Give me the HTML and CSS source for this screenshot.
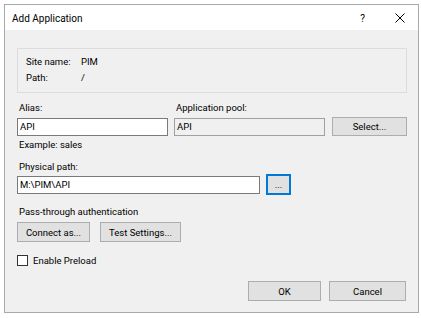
FILE: index.html
```html
<!DOCTYPE html>
<html lang="en">
<head>
    <meta charset="UTF-8">
    <title>Add Application</title>
    <link rel="stylesheet" href="styles.css">
</head>
<body>
    <div class="window">
        <div class="titlebar">
            <span class="title">Add Application</span>
            <span class="help">?</span>
            <svg class="close" width="10" height="10" viewBox="0 0 10 10">
                <path d="M0.5 0.5 L9.5 9.5 M9.5 0.5 L0.5 9.5" stroke="#000" stroke-width="1" fill="none"/>
            </svg>
        </div>
        <div class="content">
            <div class="groupbox">
                <div class="info-row"><span class="info-label">Site name:</span><span>PIM</span></div>
                <div class="info-row"><span class="info-label">Path:</span><span>/</span></div>
            </div>

            <div class="row alias-row">
                <div class="field">
                    <label>Alias:</label>
                    <div class="input">API</div>
                </div>
                <div class="field">
                    <label>Application pool:</label>
                    <div class="input readonly">API</div>
                </div>
                <button class="btn select-btn">Select...</button>
            </div>
            <div class="hint">Example: sales</div>

            <div class="field path-field">
                <label>Physical path:</label>
                <div class="row">
                    <div class="input wide">M:\PIM\API</div>
                    <button class="btn browse-btn">...</button>
                </div>
            </div>

            <div class="section-label">Pass-through authentication</div>
            <div class="row auth-row">
                <button class="btn connect-btn">Connect as...</button>
                <button class="btn test-btn">Test Settings...</button>
            </div>

            <div class="check-row">
                <span class="checkbox"></span>
                <span>Enable Preload</span>
            </div>

            <div class="row footer">
                <button class="btn ok-btn">OK</button>
                <button class="btn cancel-btn">Cancel</button>
            </div>
        </div>
    </div>
</body>
</html>
```

FILE: styles.css
```css
/* General Styles */
body {
    margin: 0;
    background: #fff;
    font-family: Roboto, "Noto Sans", sans-serif;
    font-size: 9.5px;
    color: #000;
}

.window {
    margin: 4px 0 0 4px;
    width: 413px;
    height: 307px;
    border: 1px solid #a9a9a9;
    background: #f0f0f0;
    display: flex;
    flex-direction: column;
}

.titlebar {
    height: 25px;
    background: #fff;
    display: flex;
    align-items: center;
    padding: 1px 0 0 7px;
    box-sizing: border-box;
}

.title {
    font-size: 10px;
    flex: 1;
}

.help {
    font-size: 10px;
    margin-right: 30px;
}

.close {
    margin-right: 13px;
}

.content {
    padding: 18px 11px 0 12px;
}

.groupbox {
    height: 38px;
    border: 1px solid #dcdcdc;
    padding: 5px 0 0 8px;
}

.info-row {
    display: flex;
    height: 16px;
    line-height: 16px;
    white-space: nowrap;
}

.info-label {
    width: 55px;
    flex-shrink: 0;
}

.row {
    display: flex;
    align-items: flex-end;
}

label {
    display: block;
    height: 14px;
    line-height: 14px;
    margin: 0 0 3px 2px;
    white-space: nowrap;
}

.alias-row {
    margin-top: 8px;
    gap: 6px;
}

.field .input {
    width: 147px;
}

.input {
    height: 16px;
    line-height: 16px;
    border: 1px solid #7a7a7a;
    background: #fff;
    padding-left: 2px;
    box-sizing: content-box;
}

.input.readonly {
    background: #f0f0f0;
    border-color: #a0a0a0;
}

.btn {
    font-family: inherit;
    font-size: 9.5px;
    color: #000;
    background: #e1e1e1;
    border: 1px solid #adadad;
    height: 20px;
    padding: 0;
    margin: 0;
}

.select-btn {
    width: 77px;
    height: 19px;
    margin-left: 1px;
}

.hint {
    height: 14px;
    line-height: 14px;
    margin: 2px 0 0 2px;
}

.path-field {
    margin-top: 8px;
}

.path-field label {
    margin-bottom: 0;
}

.path-field .row {
    gap: 6px;
    align-items: center;
}

.input.wide {
    width: 239px;
}

.browse-btn {
    width: 25px;
    height: 21px;
    border: 2px solid #0078d7;
    line-height: 10px;
}

.section-label {
    margin: 10px 0 0 2px;
    height: 14px;
    line-height: 14px;
}

.auth-row {
    margin-top: 3px;
    gap: 10px;
}

.connect-btn {
    width: 73px;
}

.test-btn {
    width: 81px;
}

.check-row {
    margin-top: 12px;
    display: flex;
    align-items: center;
    height: 12px;
}

.checkbox {
    width: 9px;
    height: 9px;
    border: 1px solid #333;
    background: #fff;
    margin-right: 5px;
}

.footer {
    margin-top: 15px;
    justify-content: flex-end;
    gap: 8px;
    padding-right: 1px;
}

.ok-btn {
    width: 73px;
}

.cancel-btn {
    width: 77px;
}
```
